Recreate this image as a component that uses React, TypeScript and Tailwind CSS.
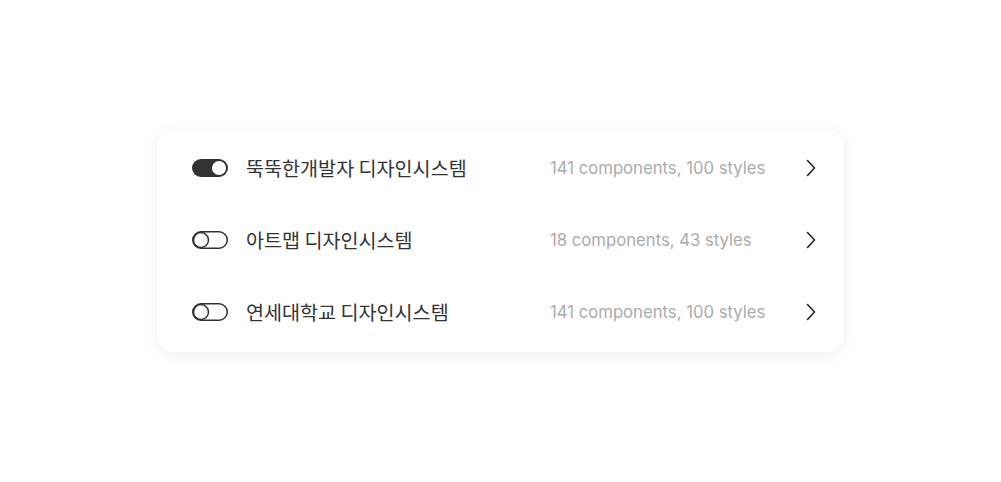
import React from "react";

const rows = [
  { on: true, title: "뚝뚝한개발자 디자인시스템", sub: "141 components, 100 styles" },
  { on: false, title: "아트맵 디자인시스템", sub: "18 components, 43 styles" },
  { on: false, title: "연세대학교 디자인시스템", sub: "141 components, 100 styles" },
];

function Toggle({ on }: { on: boolean }) {
  return on ? (
    <svg width="36" height="18" viewBox="0 0 36 18">
      <rect x="0" y="0" width="36" height="18" rx="9" fill="#333333" />
      <circle cx="27" cy="9" r="7" fill="#ffffff" />
    </svg>
  ) : (
    <svg width="36" height="18" viewBox="0 0 36 18">
      <rect x="0.75" y="0.75" width="34.5" height="16.5" rx="8.25" fill="none" stroke="#333333" strokeWidth="1.5" />
      <circle cx="9" cy="9" r="7.5" fill="none" stroke="#333333" strokeWidth="1.5" />
    </svg>
  );
}

function Chevron() {
  return (
    <svg width="12" height="18" viewBox="0 0 12 18">
      <path d="M2.5 1.5 L9.5 9 L2.5 16.5" fill="none" stroke="#222222" strokeWidth="1.6" strokeLinecap="round" strokeLinejoin="round" />
    </svg>
  );
}

export default function App() {
  return (
    <div className="w-[1001px] h-[482px] bg-white flex justify-center pt-[130px]">
      <div className="w-[687px] h-[222px] bg-white rounded-[16px] shadow-[0_2px_14px_rgba(0,0,0,0.07)] flex flex-col pt-[2px]">
        {rows.map((r, i) => (
          <div key={i} className="h-[72px] flex items-center pl-[35px] pr-[27px]">
            <Toggle on={r.on} />
            <div className="ml-[18px] w-[304px] text-[19.6px] text-[#333333] leading-none" style={{ fontFamily: '"Noto Sans CJK KR", "Noto Sans", sans-serif' }}>
              {r.title}
            </div>
            <div className="flex-1 text-[16.7px] text-[#ababab] leading-none" style={{ fontFamily: 'Inter, "Noto Sans", sans-serif' }}>
              {r.sub}
            </div>
            <Chevron />
          </div>
        ))}
      </div>
    </div>
  );
}
